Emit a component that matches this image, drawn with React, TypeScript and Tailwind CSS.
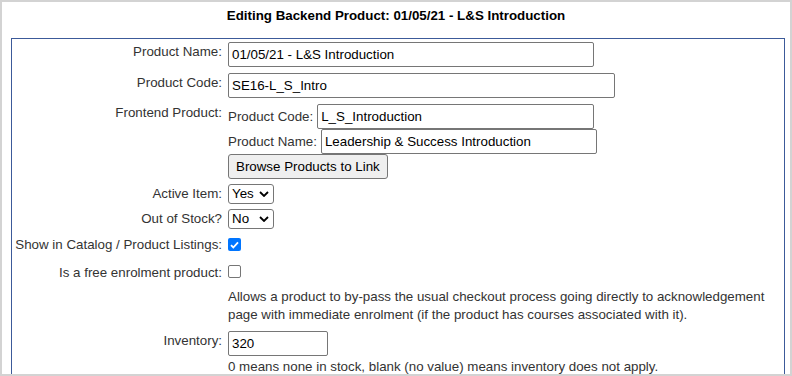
import React from 'react'

const font = { fontFamily: '"Liberation Sans", Arial, sans-serif' }

function TextBox({ value, className }: { value: string; className: string }) {
  return (
    <div
      className={`flex h-[25px] items-center rounded-[2px] border border-[#767676] bg-white px-[3px] text-black ${className}`}
    >
      {value}
    </div>
  )
}

function Select({ value }: { value: string }) {
  return (
    <div className="flex h-[20px] w-[46px] items-center justify-between rounded-[3px] border border-[#767676] bg-white pl-[3px] pr-[4px] text-black">
      <span>{value}</span>
      <svg width="10" height="6" viewBox="0 0 10 6" fill="none">
        <path d="M1 1l4 4 4-4" stroke="#000" strokeWidth="1.8" />
      </svg>
    </div>
  )
}

function Checkbox({ checked }: { checked?: boolean }) {
  if (checked) {
    return (
      <div className="flex h-[13px] w-[13px] items-center justify-center rounded-[2px] bg-[#0075ff]">
        <svg width="9" height="8" viewBox="0 0 9 8" fill="none">
          <path d="M1 4.2l2.3 2.3L8 1.3" stroke="#fff" strokeWidth="1.8" />
        </svg>
      </div>
    )
  }
  return <div className="h-[13px] w-[13px] rounded-[2px] border border-[#767676] bg-white" />
}

function Row({ label, children, className = '', labelClass = 'pt-[2px]' }: { label: string; children: React.ReactNode; className?: string; labelClass?: string }) {
  return (
    <div className={`flex ${className}`}>
      <div className={`w-[210px] shrink-0 text-right leading-[15px] ${labelClass}`}>{label}</div>
      <div className="ml-[6px] flex-1">{children}</div>
    </div>
  )
}

export default function App() {
  return (
    <div className="h-[376px] w-[792px] overflow-hidden border-2 border-[#d3d3d3] bg-white text-[13.333px] text-[#333]" style={font}>
      <div className="pt-[6px] text-center font-bold leading-[16px] text-black">
        Editing Backend Product: 01/05/21 - L&amp;S Introduction
      </div>

      <div className="ml-[9px] mr-[5px] mt-[14px] h-[400px] border border-[#3c5a99] pt-[3px] pr-[8px]">
        <Row label="Product Name:">
          <TextBox value="01/05/21 - L&S Introduction" className="w-[366px]" />
        </Row>

        <Row label="Product Code:" className="mt-[6px]">
          <TextBox value="SE16-L_S_Intro" className="w-[387px]" />
        </Row>

        <Row label="Frontend Product:" className="mt-[6px]" labelClass="pt-[1px]">
          <div className="flex flex-col">
            <div className="flex items-center">
              <span className="mr-[4px]">Product Code:</span>
              <TextBox value="L_S_Introduction" className="w-[277px]" />
            </div>
            <div className="flex items-center">
              <span className="mr-[4px]">Product Name:</span>
              <TextBox value="Leadership & Success Introduction" className="w-[276px]" />
            </div>
            <div>
              <div className="inline-flex h-[25px] items-center rounded-[3px] border border-[#767676] bg-[#efefef] px-[7px] text-black">
                Browse Products to Link
              </div>
            </div>
          </div>
        </Row>

        <Row label="Active Item:" className="mt-[5px]" labelClass="pt-[2px]">
          <Select value="Yes" />
        </Row>

        <Row label="Out of Stock?" className="mt-[5px]" labelClass="pt-[2px]">
          <Select value="No" />
        </Row>

        <Row label="Show in Catalog / Product Listings:" className="mt-[7px]" labelClass="pt-[1px]">
          <div className="pt-[2px]">
            <Checkbox checked />
          </div>
        </Row>

        <Row label="Is a free enrolment product:" className="mt-[11px]" labelClass="pt-[2px]">
          <div className="pt-[2px]">
            <Checkbox />
          </div>
        </Row>

        <div className="ml-[216px] mt-[8px] leading-[18px]">
          Allows a product to by-pass the usual checkout process going directly to acknowledgement page with immediate
          enrolment (if the product has courses associated with it).
        </div>

        <Row label="Inventory:" className="mt-[7px]">
          <TextBox value="320" className="w-[100px]" />
          <div className="mt-[3px] leading-[15px]">0 means none in stock, blank (no value) means inventory does not apply.</div>
        </Row>
      </div>
    </div>
  )
}
